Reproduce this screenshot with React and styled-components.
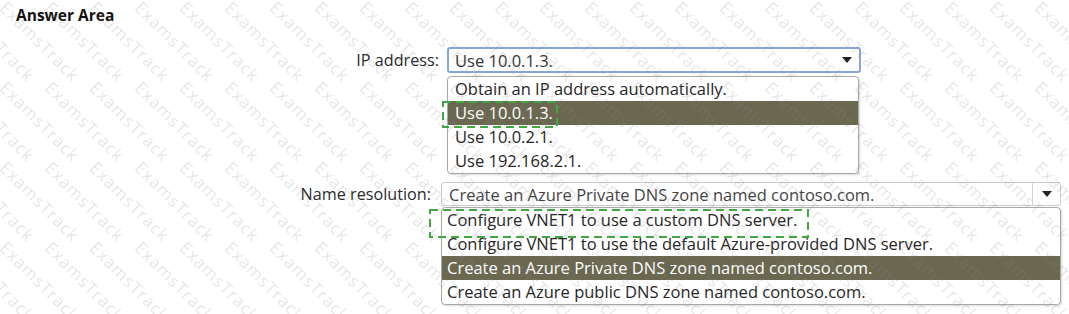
import styled, { createGlobalStyle } from "styled-components";

const ipOptions = [
    "Obtain an IP address automatically.",
    "Use 10.0.1.3.",
    "Use 10.0.2.1.",
    "Use 192.168.2.1.",
]

const dnsOptions = [
    "Configure VNET1 to use a custom DNS server.",
    "Configure VNET1 to use the default Azure-provided DNS server.",
    "Create an Azure Private DNS zone named contoso.com.",
    "Create an Azure public DNS zone named contoso.com.",
]

// green dashed answer box drawn over the picked option
function Marker({ left, top, width, height }) {
    return (
        <MarkerBox style={{ left, top, width, height }}>
            <svg width={width} height={height}>
                <rect x="1" y="1" width={width - 2} height={height - 2} fill="none"
                    stroke="#3fa93f" strokeWidth="2" strokeDasharray="8 5" />
            </svg>
        </MarkerBox>
    )
}

export default function App() {
    // watermark grid, one word per cell
    const marks = []
    for (let row = -1; row < 5; row++) {
        for (let col = -3; col < 25; col++) {
            marks.push({ x: 3 + col * 45, y: 73 + row * 80 })
        }
    }

    return (
        <>
            <GlobalStyle />
            <Page>
                <Title>Answer Area</Title>

                <Field $gap={8} $top={23}>
                    <Label $width={439} $height={26}>IP address:</Label>
                    <Column $gap={3}>
                        <Select $width={414} $height={26} $focused>
                            <SelectText $pad={6}>Use 10.0.1.3.</SelectText>
                            <Arrow />
                        </Select>
                        <List $width={412}>
                            {ipOptions.map((opt, i) => (
                                <Option key={i} $selected={i === 1} $pad={7}>
                                    {opt}
                                    {i === 1 && <Marker left={-6} top={0} width={116} height={27} />}
                                </Option>
                            ))}
                        </List>
                    </Column>
                </Field>

                <Field $gap={10} $top={8}>
                    <Label $width={431} $height={24}>Name resolution:</Label>
                    <Column $gap={1}>
                        <Select $width={620} $height={24}>
                            <SelectText $pad={7} $muted>Create an Azure Private DNS zone named contoso.com.</SelectText>
                            <ArrowBox>
                                <Arrow $boxed />
                            </ArrowBox>
                        </Select>
                        <List $width={620}>
                            {dnsOptions.map((opt, i) => (
                                <Option key={i} $selected={i === 2} $pad={5}>
                                    {opt}
                                    {i === 0 && <Marker left={-13} top={1} width={380} height={29} />}
                                </Option>
                            ))}
                        </List>
                    </Column>
                </Field>

                <Watermark>
                    {marks.map((m, i) => (
                        <Mark key={i} style={{ left: m.x, top: m.y }}>ExamsTrack</Mark>
                    ))}
                </Watermark>
            </Page>
        </>
    );
}

const GlobalStyle = createGlobalStyle`
    html, body {
        margin: 0;
        padding: 0;
        background: #ffffff;
    }
`

const Page = styled.div`
    position: relative;
    width: 1069px;
    height: 314px;
    overflow: hidden;
    padding-top: 6px;
    box-sizing: border-box;
    font-family: "Open Sans", "Noto Sans", sans-serif;
    color: #222222;
`

const Title = styled.div`
    padding-left: 16px;
    height: 18px;
    line-height: 18px;
    font-size: 15.5px;
    font-weight: bold;
    color: #111111;
`

const Field = styled.div`
    display: flex;
    align-items: flex-start;
    gap: ${p => p.$gap}px;
    margin-top: ${p => p.$top}px;
`

const Label = styled.div`
    width: ${p => p.$width}px;
    flex: 0 0 auto;
    height: ${p => p.$height}px;
    line-height: ${p => p.$height}px;
    text-align: right;
    font-size: 16.2px;
    color: #2a2a2a;
    white-space: nowrap;
`

const Column = styled.div`
    display: flex;
    flex-direction: column;
    gap: ${p => p.$gap}px;
`

const Select = styled.div`
    display: flex;
    align-items: center;
    width: ${p => p.$width}px;
    height: ${p => p.$height}px;
    box-sizing: border-box;
    border: ${p => p.$focused ? "2px solid #86a6d8" : "1px solid #c9cad3"};
    border-radius: 3px;
    background: #ffffff;
`

const SelectText = styled.div`
    flex: 1;
    padding-left: ${p => p.$pad}px;
    font-size: 16.5px;
    color: ${p => p.$muted ? "#444444" : "#333333"};
    white-space: nowrap;
`

const ArrowBox = styled.div`
    width: 27px;
    height: 100%;
    display: flex;
    align-items: center;
    justify-content: center;
    border-left: 1px solid #d6d7de;
`

const Arrow = styled.div`
    width: 0;
    height: 0;
    margin-right: ${p => p.$boxed ? 0 : 7}px;
    border-left: 5px solid transparent;
    border-right: 5px solid transparent;
    border-top: 6px solid #222222;
`

const List = styled.div`
    width: ${p => p.$width}px;
    box-sizing: border-box;
    border: 1px solid #a9a9a9;
    border-radius: 4px;
    background: #ffffff;
    box-shadow: 1px 1px 2px rgba(0, 0, 0, 0.15);
`

const Option = styled.div`
    position: relative;
    height: 24px;
    line-height: 24px;
    padding-left: ${p => p.$pad}px;
    font-size: 16.5px;
    white-space: nowrap;
    background: ${p => p.$selected ? "#6a6851" : "transparent"};
    color: ${p => p.$selected ? "#ffffff" : "#262626"};
`

const MarkerBox = styled.div`
    position: absolute;
    pointer-events: none;
    svg {
        display: block;
    }
`

const Watermark = styled.div`
    position: absolute;
    inset: 0;
    pointer-events: none;
    overflow: hidden;
`

const Mark = styled.span`
    position: absolute;
    transform: rotate(45deg);
    transform-origin: left center;
    font-size: 17px;
    letter-spacing: 1px;
    color: rgba(140, 140, 140, 0.22);
    white-space: nowrap;
`
